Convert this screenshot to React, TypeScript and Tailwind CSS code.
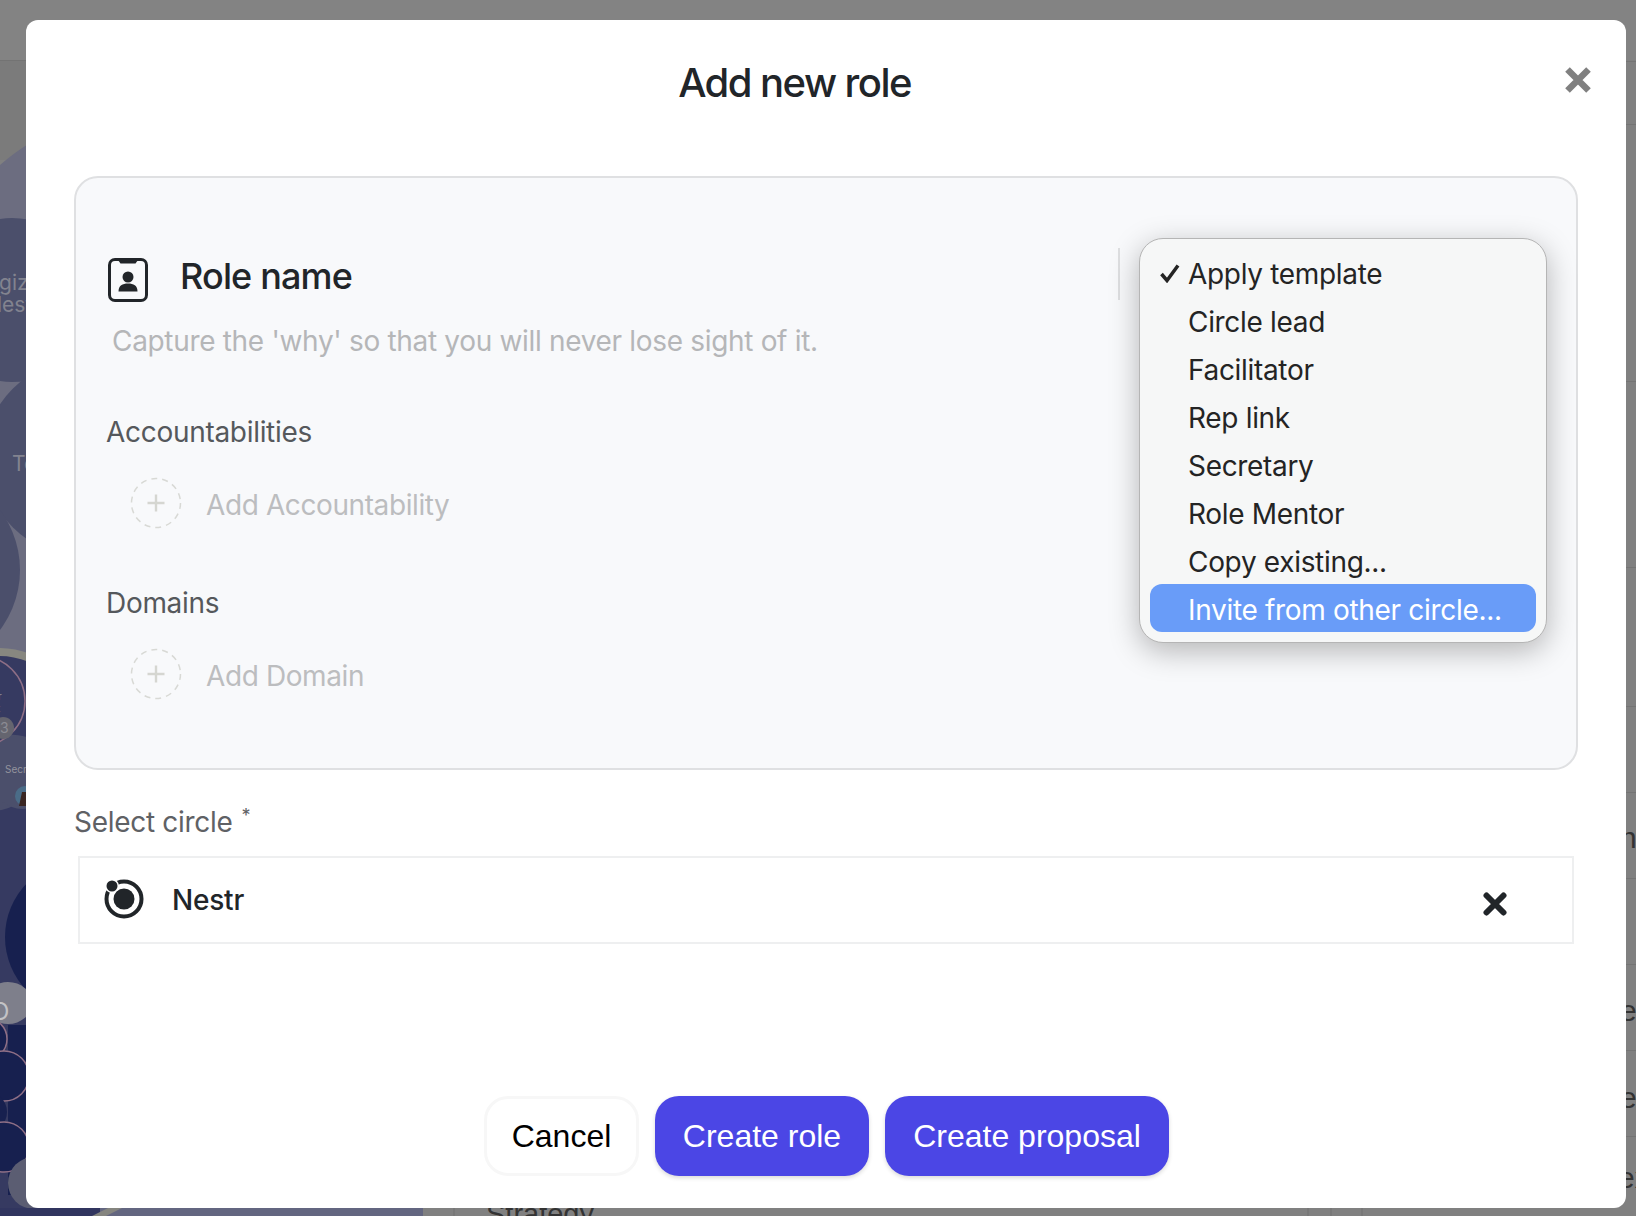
import React from "react";

const inter = "font-['Inter',sans-serif]";

function Dashed() {
  return (
    <svg width="52" height="52" viewBox="0 0 52 52" className="shrink-0">
      <circle cx="26" cy="26" r="24.500" fill="none" stroke="#d8d9d5" strokeWidth="1.500" strokeDasharray="6 5" />
      <path d="M26 17.500v17M17.500 26h17" stroke="#d5d6d1" strokeWidth="2.400" />
    </svg>
  );
}

function Section({ title, add }: { title: string; add: string }) {
  return (
    <div>
      <div className="text-[28px] leading-[34px] tracking-[-0.3px] text-[#55585c]">{title}</div>
      <div className="ml-[24px] mt-[28px] flex h-[52px] items-center gap-[24px]">
        <Dashed />
        <span className="pt-[4px] text-[28px] tracking-[-0.4px] text-[#bcbdbf]">{add}</span>
      </div>
    </div>
  );
}

const items = ["Apply template", "Circle lead", "Facilitator", "Rep link", "Secretary", "Role Mentor", "Copy existing..."];

function Backdrop() {
  const rowLines = [61, 124, 381, 567, 706, 792, 878, 964, 1050, 1136];
  return (
    <svg className="absolute inset-0" width="1636" height="1216" viewBox="0 0 1636 1216">
      <rect x="0" y="0" width="1636" height="60" fill="#838383" />
      <rect x="0" y="60" width="30" height="100" fill="#7b7b7b" />
      <rect x="0" y="60" width="30" height="1" fill="#737373" />
      {/* left strip: circle diagram */}
      <path d="M0 165Q15 152 30 143V662L0 652Z" fill="#6c6d80" />
      <circle cx="12" cy="300" r="82" fill="#4b4f6b" />
      <circle cx="82" cy="458" r="98" fill="#4b4f6b" />
      <circle cx="-80" cy="570" r="100" fill="#4b4f6b" />
      <rect x="0" y="656" width="30" height="560" fill="#363a61" />
      <path d="M0 652Q14 652 30 658" fill="none" stroke="#878780" strokeWidth="8" />
      <ellipse cx="-10" cy="772" rx="48" ry="39" fill="#4b4f6b" />
      <path d="M0 734Q30 735 30 740V808Q15 812 0 800Z" fill="#4b4f6b" />
      <circle cx="-20" cy="701" r="45" fill="#363a61" stroke="#8f6f86" strokeWidth="1.500" />
      <circle cx="3" cy="728" r="11" fill="#65656f" />
      <text x="0" y="733" fontSize="14" fill="#8b8b93" fontFamily="Inter, sans-serif">3</text>
      <text x="-8" y="700" fontSize="10" fill="#93939d" fontFamily="Inter, sans-serif">or</text>
      <text x="-3" y="712" fontSize="10" fill="#93939d" fontFamily="Inter, sans-serif">t</text>
      <text x="5" y="773" fontSize="10" fill="#93939d" fontFamily="Inter, sans-serif">Secr</text>
      <circle cx="25" cy="796" r="10" fill="#4a6c88" />
      <path d="M19 806L22 792L30 792L30 806Z" fill="#3a2622" />
      <text x="-1" y="290" fontSize="21" fill="#82838f" fontFamily="Inter, sans-serif">gizi</text>
      <text x="-3" y="312" fontSize="21" fill="#82838f" fontFamily="Inter, sans-serif">lest</text>
      <text x="12" y="471" fontSize="21" fill="#82838f" fontFamily="Inter, sans-serif">Te</text>
      <circle cx="82" cy="937" r="77" fill="#17204f" />
      <rect x="8" y="1025" width="22" height="170" fill="#17204f" />
      <ellipse cx="8" cy="1003" rx="24" ry="21" fill="#7e7f8b" />
      <text x="-9" y="1020" fontSize="24" fill="#c3c3c6" fontFamily="Inter, sans-serif">O</text>
      <circle cx="-14" cy="1039" r="21" fill="#17204f" stroke="#8f6f86" strokeWidth="1.500" />
      <circle cx="4" cy="1076" r="25" fill="#17204f" stroke="#8f6f86" strokeWidth="1.500" />
      <circle cx="-14" cy="1112" r="21" fill="#17204f" />
      <circle cx="4" cy="1147" r="25" fill="#17204f" stroke="#8f6f86" strokeWidth="1.500" />
      <circle cx="34" cy="1183" r="26" fill="#5b5d72" />
      {/* bottom strip */}
      <rect x="0" y="1208" width="100" height="8" fill="#31355f" />
      <rect x="100" y="1208" width="323" height="8" fill="#636680" />
      <path d="M108 1208H122L106 1216H92Z" fill="#85857f" />
      <path d="M454 1208v8M1308 1208v8M1331 1208v8M1362 1208v8" stroke="#707070" strokeWidth="1" />
      {/* right strip: table rows */}
      {rowLines.map((y) => (
        <rect key={y} x="1626" y={y} width="10" height="1" fill="#747474" />
      ))}
    </svg>
  );
}

export default function App() {
  return (
    <div className={`relative h-[1216px] w-[1636px] overflow-hidden bg-[#808080] ${inter}`}>
      <Backdrop />
      <span className="absolute left-[486px] top-[1196px] font-['Liberation_Sans',sans-serif] text-[29px] leading-[36px] text-[#333333]">Strategy</span>
      <div className="font-['Liberation_Sans',sans-serif] text-[30px] leading-[36px] text-[#333333]">
        <span className="absolute left-[1620px] top-[820px]">n</span>
        <span className="absolute left-[1620px] top-[993px]">e</span>
        <span className="absolute left-[1620px] top-[1080px]">e</span>
        <span className="absolute left-[1618px] top-[1160px]">ex</span>
      </div>

      <div className="absolute left-[26px] top-[20px] flex h-[1188px] w-[1600px] flex-col rounded-[12px] bg-white px-[48px]">
        <div className="relative flex h-[156px] shrink-0 justify-center pt-[36px]">
          <span className="ml-[-63px] text-[40px] font-medium leading-[54px] tracking-[-1.55px] text-[#212529]">Add new role</span>
          <svg width="30" height="30" viewBox="0 0 30 30" className="absolute right-[-15px] top-[45px]">
            <path d="M4.500 4.500L25.500 25.500M25.500 4.500L4.500 25.500" stroke="#808080" strokeWidth="6.500" />
          </svg>
        </div>

        <div className="relative h-[594px] shrink-0 rounded-[24px] border-2 border-[#dfe0e2] bg-[#f8f9fb] pl-[30px] pt-[80px]">
          <div className="ml-[2px] flex items-center gap-[32px]">
            <svg width="40" height="44" viewBox="0 0 40 44" className="shrink-0">
              <rect x="1.500" y="1.500" width="37" height="41" rx="5.500" fill="none" stroke="#212529" strokeWidth="3" />
              <path d="M10 2H30L27.500 5.500H12.500Z" fill="#212529" />
              <circle cx="20" cy="19" r="5.500" fill="#212529" />
              <path d="M10.500 33.500C10.500 27.500 14.500 25.500 20 25.500C25.500 25.500 29.500 27.500 29.500 33.500Z" fill="#212529" />
            </svg>
            <span className="mt-[-8px] text-[36px] font-medium leading-[44px] tracking-[-0.85px] text-[#212529]">Role name</span>
          </div>
          <div className="ml-[6px] mt-[22px] text-[28px] leading-[34px] tracking-[-0.32px] text-[#b5b6b8]">Capture the 'why' so that you will never lose sight of it.</div>
          <div className="mt-[57px]"><Section title="Accountabilities" add="Add Accountability" /></div>
          <div className="mt-[57px]"><Section title="Domains" add="Add Domain" /></div>

          <div className="absolute left-[1042px] top-[70px] h-[52px] w-[2px] bg-[#dedfe1]" />

          <div className="absolute left-[1063px] top-[60px] flex h-[405px] w-[408px] flex-col rounded-[24px] border border-[#b5b5b5] bg-[#f6f7f7] px-[10px] pb-[10px] pt-[9px] shadow-[0_8px_30px_rgba(0,0,0,0.28)]">
            {items.map((t, i) => (
              <div key={t} className="relative h-[48px] pl-[38px] pt-[2px] text-[28px] leading-[48px] tracking-[-0.32px] text-[#242424]">
                {i === 0 && (
                  <svg width="20" height="20" viewBox="0 0 20 20" className="absolute left-[10px] top-[15px]">
                    <path d="M1.500 11L7 17.500L18 2.500" fill="none" stroke="#242424" strokeWidth="3.500" />
                  </svg>
                )}
                {t}
              </div>
            ))}
            <div className="h-[48px] rounded-[12px] bg-[#699cf8] pl-[38px] pt-[2px] text-[28px] leading-[48px] tracking-[-0.32px] text-white">Invite from other circle...</div>
          </div>
        </div>

        <div className="mt-[35px] flex items-start text-[28px] leading-[34px] tracking-[-0.3px] text-[#5f6165]">
          <span>Select circle</span>
          <span className="ml-[9px] mt-[2px] text-[18px] leading-[18px]">*</span>
        </div>

        <div className="ml-[4px] mt-[17px] flex h-[88px] w-[1496px] items-center border-2 border-[#eeeff0] pl-[23px]">
          <svg width="42" height="42" viewBox="0 0 42 42" className="mt-[-3px] shrink-0">
            <circle cx="21" cy="21" r="17.500" fill="none" stroke="#212529" strokeWidth="4" />
            <circle cx="21" cy="21" r="10.500" fill="#212529" />
            <circle cx="9" cy="8" r="7" fill="#fff" />
            <circle cx="9" cy="8" r="5.500" fill="#212529" />
          </svg>
          <span className="ml-[27px] text-[28px] font-medium tracking-[-0.2px] text-[#212529]">Nestr</span>
          <svg width="24" height="24" viewBox="0 0 24 24" className="ml-auto mr-[65px] mt-[8px]">
            <path d="M3.500 3.500L20.500 20.500M20.500 3.500L3.500 20.500" stroke="#212529" strokeWidth="6" strokeLinecap="round" />
          </svg>
        </div>

        <div className="mb-[32px] ml-[410px] mt-auto flex gap-[16px] font-['Liberation_Sans',sans-serif] text-[32px]">
          <button className="h-[80px] w-[155px] rounded-[24px] border-[3px] border-[#f7f7f7] bg-white text-black">Cancel</button>
          <button className="h-[80px] w-[214px] rounded-[24px] bg-[#4b46e5] text-white shadow-[0_2px_4px_rgba(0,0,0,0.15)]">Create role</button>
          <button className="h-[80px] w-[284px] rounded-[24px] bg-[#4b46e5] text-white shadow-[0_2px_4px_rgba(0,0,0,0.15)]">Create proposal</button>
        </div>
      </div>
    </div>
  );
}
